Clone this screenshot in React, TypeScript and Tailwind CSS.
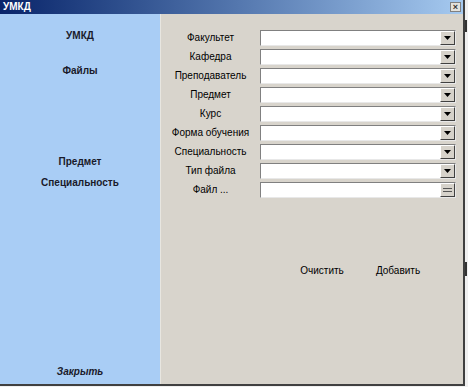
const fields = [
  "Факультет",
  "Кафедра",
  "Преподаватель",
  "Предмет",
  "Курс",
  "Форма обучения",
  "Специальность",
  "Тип файла",
];

const DropButton = ({ file }: { file?: boolean }) => (
  <div className="w-[15px] h-[14px] bg-[#d6d2ca] border-t border-l border-t-white border-l-white border-b border-r border-b-[#404040] border-r-[#404040] flex items-center justify-center shrink-0">
    {file ? (
      <div className="flex flex-col gap-[2px]">
        <div className="w-[9px] h-px bg-[#555]" />
        <div className="w-[9px] h-px bg-[#555]" />
      </div>
    ) : (
      <svg width="7" height="4" viewBox="0 0 7 4">
        <path d="M0 0h7L3.5 4z" fill="#000" />
      </svg>
    )}
  </div>
);

const Field = ({ label, file }: { label: string; file?: boolean }) => (
  <div className="flex items-center h-[16px] mb-[3px]">
    <div className="w-[99px] text-center text-[10px] leading-none text-black">{label}</div>
    <div className="w-[196px] h-[16px] bg-white border-t border-l border-t-[#808080] border-l-[#808080] border-b border-r border-b-[#e8e8e8] border-r-[#e8e8e8] flex justify-end items-center">
      <DropButton file={file} />
    </div>
  </div>
);

export default function App() {
  return (
    <div
      className="w-[468px] h-[387px] bg-[#f0f0f0] flex overflow-hidden"
      style={{ fontFamily: '"Liberation Sans", Arial, sans-serif' }}
    >
      <div className="w-[465px] h-[386px] flex flex-col border-r-2 border-b-2 border-r-[#404040] border-b-[#404040]">
        {/* title bar */}
        <div className="h-[14px] bg-gradient-to-r from-[#0a246a] to-[#a6caf0] flex items-center justify-between pl-[3px] pr-[2px]">
          <span className="text-white font-bold text-[10px] leading-none">УМКД</span>
          <div className="w-[11px] h-[10px] bg-[#e4e2dc] border border-[#808080] flex items-center justify-center text-[9px] leading-none text-[#333] font-bold">
            ×
          </div>
        </div>

        <div className="flex flex-1">
          {/* left menu */}
          <div className="w-[160px] bg-[#a9cdf5] flex flex-col items-center text-[10px] font-bold text-[#1a1a2a] leading-none">
            <div className="mt-[17px]">УМКД</div>
            <div className="mt-[25px]">Файлы</div>
            <div className="mt-[81px]">Предмет</div>
            <div className="mt-[11px]">Специальность</div>
            <div className="mt-auto mb-[7px] italic font-bold">Закрыть</div>
          </div>

          {/* form */}
          <div className="flex-1 bg-[#d8d4cc] pt-[16px] border-l border-l-[#e8e6e0]">
            {fields.map((f) => (
              <Field key={f} label={f} />
            ))}
            <Field label="Файл ..." file />
            <div className="flex mt-[68px] text-[10px] leading-none text-black">
              <div className="w-[76px] ml-[123px] text-center">Очистить</div>
              <div className="w-[76px] text-center">Добавить</div>
            </div>
          </div>
        </div>
      </div>
      <div className="flex-1 flex flex-col">
        <div className="h-[20px]" />
        <div className="h-[12px] w-[2px] bg-[#333]" />
        <div className="h-[230px]" />
        <div className="h-[14px] w-[2px] bg-[#333]" />
      </div>
    </div>
  );
}
